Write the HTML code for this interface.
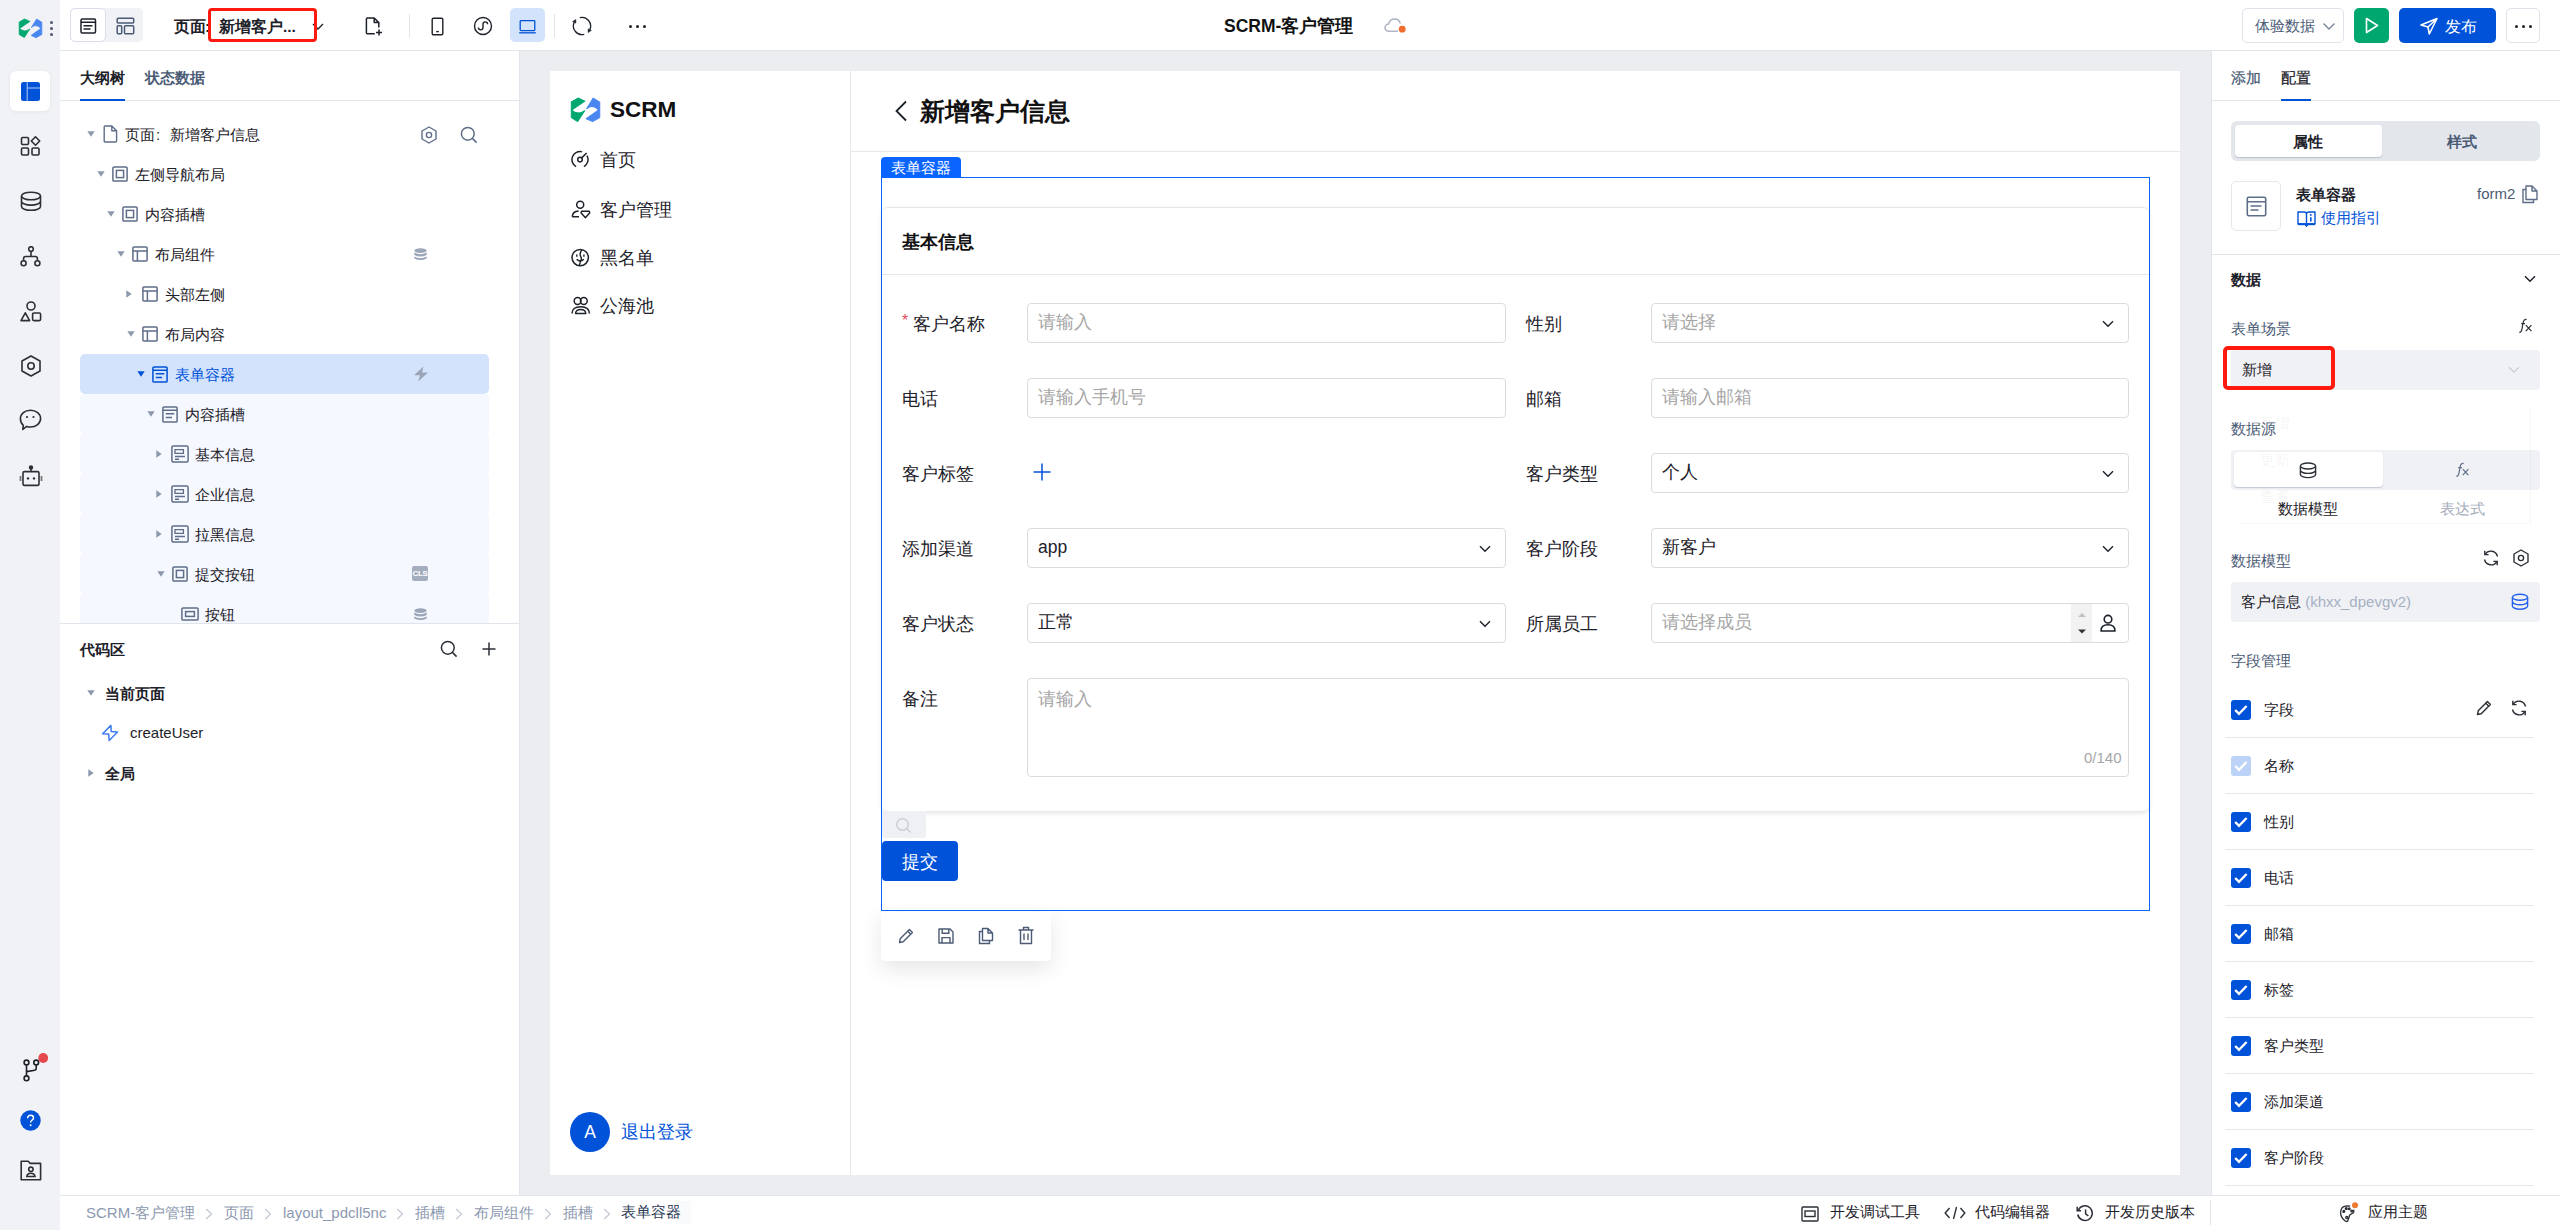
<!DOCTYPE html>
<html><head><meta charset="utf-8">
<style>
*{box-sizing:border-box;margin:0;padding:0}
html,body{width:2560px;height:1230px;overflow:hidden;background:#fff;font-family:"Liberation Sans",sans-serif;color:#1d2129}
.a{position:absolute}
svg{display:block}
.t{position:absolute;white-space:nowrap;line-height:1;margin-top:1.5px}
</style></head><body>
<!-- left rail -->
<div class="a" id="rail" style="left:0;top:0;width:60px;height:1230px;background:#f0f2f5"></div>
<!-- top bar -->
<div class="a" id="top" style="left:60px;top:0;width:2500px;height:51px;background:#fff;border-bottom:1px solid #e1e4ea"></div>
<!-- left panel -->
<div class="a" id="lp" style="left:60px;top:51px;width:460px;height:1144px;background:#fff;border-right:1px solid #e1e4ea"></div>
<!-- canvas -->
<div class="a" id="cv" style="left:520px;top:51px;width:1691px;height:1144px;background:#ebedf1"></div>
<div class="a" id="page" style="left:550px;top:71px;width:1630px;height:1104px;background:#fff"></div>
<!-- right panel -->
<div class="a" id="rp" style="left:2211px;top:51px;width:349px;height:1144px;background:#fff;border-left:1px solid #e1e4ea"></div>
<!-- bottom bar -->
<div class="a" id="bb" style="left:60px;top:1195px;width:2500px;height:35px;background:#fff;border-top:1px solid #e1e4ea"></div>

<!-- RAIL CONTENT -->
<svg class="a" style="left:15px;top:15px" width="32" height="26" viewBox="0 0 32 26"><path d="M4.2 7 L9.5 4 L15 6.4 L4.5 13.5 Q9.6 18 14.8 14 L9.3 22.6 L4.2 19.5 Z" fill="#00a870" stroke="#00a870" stroke-width="0.8" stroke-linejoin="round"/><path d="M21.6 4 L26.8 7.2 V19.5 L21.1 22.7 L16.1 20.4 L25.9 13.4 Q21.1 8.3 16.4 12.5 Z" fill="#4a86f0" stroke="#4a86f0" stroke-width="0.8" stroke-linejoin="round"/></svg>
<div class="a" style="left:50px;top:21px;width:3px;height:3px;border-radius:50%;background:#4b5670"></div>
<div class="a" style="left:50px;top:27px;width:3px;height:3px;border-radius:50%;background:#4b5670"></div>
<div class="a" style="left:50px;top:33px;width:3px;height:3px;border-radius:50%;background:#4b5670"></div>
<div class="a" style="left:10px;top:71px;width:40px;height:40px;border-radius:6px;background:#fff;box-shadow:0 1px 4px rgba(0,0,0,0.06)"></div>
<svg class="a" style="left:21px;top:82px" width="19" height="19" viewBox="0 0 19 19"><rect x="0" y="0" width="19" height="19" rx="2.5" fill="#0052d9"/><path d="M6.2 0 V19 M6.2 6 H19" stroke="#fff" stroke-width="1" opacity=".7"/></svg>
<svg class="a" style="left:20px;top:136px" width="21" height="21" viewBox="0 0 21 21" fill="none" stroke="#2b2f36" stroke-width="1.6"><rect x="1.5" y="1.5" width="7" height="7" rx="1.2"/><rect x="1.5" y="12" width="7" height="7" rx="1.2"/><rect x="12" y="12" width="7" height="7" rx="1.2"/><path d="M15.5 0.8 L19.7 5 L15.5 9.2 L11.3 5 Z" stroke-linejoin="round"/></svg>
<svg class="a" style="left:20px;top:191px" width="22" height="21" viewBox="0 0 22 21" fill="none" stroke="#2b2f36" stroke-width="1.6"><ellipse cx="11" cy="5" rx="9.5" ry="3.8"/><path d="M1.5 5 V15.5 C1.5 17.6 5.8 19.3 11 19.3 C16.2 19.3 20.5 17.6 20.5 15.5 V5 M1.5 10.3 C1.5 12.4 5.8 14.1 11 14.1 C16.2 14.1 20.5 12.4 20.5 10.3"/></svg>
<svg class="a" style="left:20px;top:246px" width="22" height="21" viewBox="0 0 22 21" fill="none" stroke="#2b2f36" stroke-width="1.6"><circle cx="11" cy="3" r="2.3"/><circle cx="3.6" cy="17.3" r="2.5"/><circle cx="17.4" cy="17.3" r="2.5"/><path d="M11 5.3 V10 M3.6 14.8 V12.5 Q3.6 10.5 5.6 10.5 H15.4 Q17.4 10.5 17.4 12.5 V14.8"/></svg>
<svg class="a" style="left:20px;top:301px" width="22" height="21" viewBox="0 0 22 21" fill="none" stroke="#2b2f36" stroke-width="1.6"><circle cx="11" cy="5" r="4"/><path d="M5.3 11.8 L9.6 19.6 H1 Z" stroke-linejoin="round"/><rect x="12.6" y="12" width="8" height="7.6" rx="1.3"/></svg>
<svg class="a" style="left:20px;top:355px" width="22" height="22" viewBox="0 0 22 22" fill="none" stroke="#2b2f36" stroke-width="1.6"><path d="M11 1 L20 6 V16 L11 21 L2 16 V6 Z" stroke-linejoin="round"/><circle cx="11" cy="11" r="3.2"/></svg>
<svg class="a" style="left:19px;top:409px" width="23" height="22" viewBox="0 0 23 22" fill="none" stroke="#2b2f36" stroke-width="1.6"><path d="M11.5 1.2 C17.2 1.2 21.6 4.9 21.6 9.6 C21.6 14.3 17.2 18 11.5 18 C10.2 18 8.9 17.8 7.7 17.4 L3.8 20.4 L4.3 16.4 C2.5 14.9 1.4 12.4 1.4 9.6 C1.4 4.9 5.8 1.2 11.5 1.2 Z" stroke-linejoin="round"/><circle cx="8" cy="8" r="1.1" fill="#2b2f36" stroke="none"/><circle cx="14.5" cy="8" r="1.1" fill="#2b2f36" stroke="none"/></svg>
<svg class="a" style="left:19px;top:465px" width="24" height="22" viewBox="0 0 24 22" fill="none" stroke="#2b2f36" stroke-width="1.6"><circle cx="12" cy="2.4" r="1.4" fill="#2b2f36"/><path d="M12 3.5 V6.5"/><rect x="4" y="6.6" width="16" height="13.8" rx="1.5"/><path d="M1.5 11 V16 M22.5 11 V16" stroke-width="1.8" stroke="#777"/><circle cx="9" cy="13.4" r="1.2" fill="#2b2f36" stroke="none"/><circle cx="15" cy="13.4" r="1.2" fill="#2b2f36" stroke="none"/></svg>
<svg class="a" style="left:20px;top:1052px" width="30" height="32" viewBox="0 0 30 32" fill="none" stroke="#1d2129" stroke-width="1.6"><circle cx="6.5" cy="10.5" r="2.4"/><circle cx="6.5" cy="26.3" r="2.4"/><circle cx="16.2" cy="10.5" r="2.4"/><path d="M6.5 12.9 V23.9 M16.2 12.9 V16.6 Q16.2 18 14.8 18.2 L6.5 19.6"/><circle cx="23.2" cy="6" r="4.9" fill="#e5484d" stroke="none"/></svg>
<svg class="a" style="left:20px;top:1110px" width="21" height="21" viewBox="0 0 21 21"><circle cx="10.5" cy="10.5" r="10.2" fill="#0052d9"/><path d="M7.6 8.2 C7.6 6.4 8.9 5.3 10.6 5.3 C12.3 5.3 13.5 6.4 13.5 7.9 C13.5 9.3 12.5 9.9 11.6 10.5 C10.9 11 10.6 11.5 10.6 12.6" fill="none" stroke="#fff" stroke-width="1.5"/><circle cx="10.6" cy="15.2" r="1" fill="#fff"/></svg>
<svg class="a" style="left:20px;top:1160px" width="22" height="21" viewBox="0 0 22 21" fill="none" stroke="#2b2f36" stroke-width="1.6"><path d="M1.2 1.3 H8.2 L10.2 3.4 H20.6 V19.8 H1.2 Z" stroke-linejoin="round"/><circle cx="10.9" cy="9.3" r="2.2"/><path d="M6.8 16.5 Q7.2 13.2 10.9 13.2 Q14.6 13.2 15 16.5 Z"/></svg>

<!-- TOPBAR CONTENT -->
<div class="a" style="left:70px;top:8px;width:73px;height:34px;border-radius:5px;background:#f0f2f5"></div>
<div class="a" style="left:70px;top:8px;width:36px;height:34px;border-radius:5px;background:#fff;border:1px solid #d9dee8"></div>
<svg class="a" style="left:80px;top:18px" width="17" height="16" viewBox="0 0 17 16" fill="none" stroke="#1d2129" stroke-width="1.5"><rect x="1" y="1" width="14.5" height="14" rx="1.2"/><path d="M1 4.3 H15.5 M3.5 7.8 H12.5 M3.5 10.9 H10.5"/></svg>
<svg class="a" style="left:116px;top:17px" width="19" height="18" viewBox="0 0 19 18" fill="none" stroke="#4b5b76" stroke-width="1.5"><rect x="1.2" y="1.2" width="16.5" height="4.8" rx="1"/><rect x="1.2" y="8.8" width="4.5" height="8" rx="1"/><rect x="8.5" y="8.8" width="9.2" height="8" rx="1"/></svg>
<div class="t" style="left:174px;top:17px;font-size:15.5px;font-weight:bold;color:#1d2129">页面</div><div class="t" style="left:205px;top:17px;font-size:15.5px;font-weight:bold;color:#1d2129">:</div>
<div class="t" style="left:219px;top:17px;font-size:15.5px;font-weight:bold;color:#1d2129">新增客户...</div>
<svg class="a" style="left:312px;top:22px" width="12" height="10" viewBox="0 0 12 10" fill="none" stroke="#1d2129" stroke-width="1.4"><path d="M1 2 L6 7 L11 2"/></svg>
<div class="a" style="left:208px;top:8px;width:109px;height:34px;border:3.3px solid #ff1a0f;border-radius:4px"></div>
<svg class="a" style="left:365px;top:17px" width="18" height="19" viewBox="0 0 18 19" fill="none" stroke="#1d2129" stroke-width="1.5"><path d="M9.8 16.8 H2.4 Q1.4 16.8 1.4 15.8 V2 Q1.4 1 2.4 1 H9.2 L13.8 5.6 V10.5 M9.2 1 V5.6 H13.8" stroke-linejoin="round"/><path d="M14 12.5 V18.5 M11 15.5 H17"/></svg>
<div class="a" style="left:409px;top:14px;width:1px;height:24px;background:#e1e4ea"></div>
<svg class="a" style="left:431px;top:17px" width="13" height="19" viewBox="0 0 13 19" fill="none" stroke="#1d2129" stroke-width="1.4"><rect x="1.2" y="1.2" width="10.6" height="16.6" rx="1.3"/><path d="M5.2 14.6 H7.8"/></svg>
<svg class="a" style="left:472.5px;top:16px" width="20" height="20" viewBox="0 0 20 20" fill="none" stroke="#1d2129" stroke-width="1.4"><circle cx="10" cy="10" r="8.5"/><path d="M5.4 11.6 A2.3 2.3 0 0 0 10 11.6 V8.2 A2.3 2.3 0 1 1 14.6 8.2"/></svg>
<div class="a" style="left:510px;top:8px;width:35px;height:34px;border-radius:5px;background:#d4e3fc"></div>
<svg class="a" style="left:518px;top:19px" width="19" height="16" viewBox="0 0 19 16" fill="none" stroke="#0052d9" stroke-width="1.3"><rect x="2.2" y="1.6" width="14.6" height="10" rx="0.8"/><path d="M1.2 13.8 H17.8"/></svg>
<div class="a" style="left:554px;top:14px;width:1px;height:24px;background:#e1e4ea"></div>
<svg class="a" style="left:572.4px;top:15.9px" width="20" height="20" viewBox="0 0 20 20" fill="none" stroke="#1d2129" stroke-width="1.3"><path d="M7.77 1.69 A8.6 8.6 0 0 1 17.79 13.63"/><path d="M12.23 18.31 A8.6 8.6 0 0 1 2.21 6.37"/><path d="M19.42 14.39 L16.08 16.6 L16.16 12.87 Z" fill="#1d2129" stroke-width="0.5" stroke-linejoin="round"/><path d="M0.58 5.61 L3.92 3.4 L3.84 7.13 Z" fill="#1d2129" stroke-width="0.5" stroke-linejoin="round"/></svg>
<div class="a" style="left:629px;top:25px;width:3px;height:3px;border-radius:50%;background:#1d2129"></div>
<div class="a" style="left:636px;top:25px;width:3px;height:3px;border-radius:50%;background:#1d2129"></div>
<div class="a" style="left:643px;top:25px;width:3px;height:3px;border-radius:50%;background:#1d2129"></div>
<div class="t" style="left:1224px;top:16px;font-size:17.5px;font-weight:bold;color:#111">SCRM-客户管理</div>
<svg class="a" style="left:1384px;top:17px" width="24" height="18" viewBox="0 0 24 18" fill="none"><path d="M6 14.2 H4.8 C2.6 14.2 1 12.6 1 10.6 C1 8.6 2.6 7 4.6 7 C5.2 4 7.6 2 10.6 2 C13.4 2 15.7 3.8 16.3 6.6" stroke="#aab2c0" stroke-width="1.4"/><path d="M6 14.2 H14" stroke="#aab2c0" stroke-width="1.4"/><circle cx="18.2" cy="12.2" r="3.4" fill="#ef6c2f"/></svg>
<div class="a" style="left:2242px;top:8px;width:102px;height:35px;border:1px solid #dfe3ea;border-radius:5px;background:#fff"></div>
<div class="t" style="left:2255px;top:16px;font-size:15px;color:#4b5b76">体验数据</div>
<svg class="a" style="left:2322px;top:22px" width="14" height="9" viewBox="0 0 14 9" fill="none" stroke="#7b8699" stroke-width="1.4"><path d="M1.5 1.5 L7 7 L12.5 1.5"/></svg>
<div class="a" style="left:2354px;top:8px;width:35px;height:35px;border-radius:5px;background:#00a870"></div>
<svg class="a" style="left:2365px;top:17px" width="14" height="17" viewBox="0 0 14 17" fill="none" stroke="#fff" stroke-width="1.6"><path d="M1.5 1.5 L12.5 8.5 L1.5 15.5 Z" stroke-linejoin="round"/></svg>
<div class="a" style="left:2399px;top:8px;width:97px;height:35px;border-radius:5px;background:#0052d9"></div>
<svg class="a" style="left:2420px;top:17px" width="18" height="18" viewBox="0 0 18 18" fill="none" stroke="#fff" stroke-width="1.6"><path d="M1 8 L17 1.5 L9.3 17 L8 10 Z M8 10 L17 1.5" stroke-linejoin="round"/></svg>
<div class="t" style="left:2445px;top:17px;font-size:15.5px;color:#fff">发布</div>
<div class="a" style="left:2506px;top:8px;width:34px;height:35px;border:1px solid #dfe3ea;border-radius:5px;background:#fff"></div>
<div class="a" style="left:2515px;top:25px;width:3px;height:3px;border-radius:50%;background:#1d2129"></div>
<div class="a" style="left:2522px;top:25px;width:3px;height:3px;border-radius:50%;background:#1d2129"></div>
<div class="a" style="left:2529px;top:25px;width:3px;height:3px;border-radius:50%;background:#1d2129"></div>
<!-- LEFT PANEL -->
<div class="t" style="left:80px;top:68px;font-size:15px;color:#1d2129;font-weight:bold">大纲树</div>
<div class="t" style="left:145px;top:68px;font-size:15px;color:#4b5b76;font-weight:bold">状态数据</div>
<div class="a" style="left:60px;top:100px;width:459px;height:1px;background:#e1e4ea"></div>
<div class="a" style="left:80px;top:99px;width:45px;height:2px;background:#0052d9"></div>
<div class="a" style="left:80px;top:354px;width:409px;height:40px;border-radius:5px;background:#d4e3fc"></div>
<div class="a" style="left:80px;top:394px;width:409px;height:40px;border-radius:4px;background:#f5f8ff"></div>
<div class="a" style="left:80px;top:434px;width:409px;height:40px;border-radius:4px;background:#f5f8ff"></div>
<div class="a" style="left:80px;top:474px;width:409px;height:40px;border-radius:4px;background:#f5f8ff"></div>
<div class="a" style="left:80px;top:514px;width:409px;height:40px;border-radius:4px;background:#f5f8ff"></div>
<div class="a" style="left:80px;top:554px;width:409px;height:40px;border-radius:4px;background:#f5f8ff"></div>
<div class="a" style="left:80px;top:594px;width:409px;height:40px;border-radius:4px;background:#f5f8ff"></div>
<div class="a" style="left:80px;top:634px;width:409px;height:29px;border-radius:4px;background:#f5f8ff"></div>
<svg class="a" style="left:87px;top:131px" width="8" height="6" viewBox="0 0 8 6"><path d="M0.3 0.3 H7.7 L4 5.7 Z" fill="#8d98ad"/></svg>
<svg class="a" style="left:103px;top:125px" width="15" height="18" viewBox="0 0 15 18" fill="none" stroke="#5e6d88" stroke-width="1.4"><path d="M1.2 2 Q1.2 1 2.2 1 H8.8 L13.6 5.8 V16 Q13.6 17 12.6 17 H2.2 Q1.2 17 1.2 16 Z M8.8 1 V5.8 H13.6" stroke-linejoin="round"/></svg>
<div class="t" style="left:125px;top:125px;font-size:15px;color:#1d2129;font-weight:normal">页面</div><div class="t" style="left:156px;top:125px;font-size:15px;color:#1d2129;font-weight:normal">:</div><div class="t" style="left:170px;top:125px;font-size:15px;color:#1d2129;font-weight:normal">新增客户信息</div>
<svg class="a" style="left:97px;top:171px" width="8" height="6" viewBox="0 0 8 6"><path d="M0.3 0.3 H7.7 L4 5.7 Z" fill="#8d98ad"/></svg>
<svg class="a" style="left:112px;top:166px" width="16" height="16" viewBox="0 0 16 16" fill="none" stroke="#5e6d88" stroke-width="1.5"><rect x="0.9" y="0.9" width="14.2" height="14.2" rx="1.2"/><rect x="4.4" y="4.4" width="7.2" height="7.2"/></svg>
<div class="t" style="left:135px;top:165px;font-size:15px;color:#1d2129;font-weight:normal">左侧导航布局</div>
<svg class="a" style="left:107px;top:211px" width="8" height="6" viewBox="0 0 8 6"><path d="M0.3 0.3 H7.7 L4 5.7 Z" fill="#8d98ad"/></svg>
<svg class="a" style="left:122px;top:206px" width="16" height="16" viewBox="0 0 16 16" fill="none" stroke="#5e6d88" stroke-width="1.5"><rect x="0.9" y="0.9" width="14.2" height="14.2" rx="1.2"/><rect x="4.4" y="4.4" width="7.2" height="7.2"/></svg>
<div class="t" style="left:145px;top:205px;font-size:15px;color:#1d2129;font-weight:normal">内容插槽</div>
<svg class="a" style="left:117px;top:251px" width="8" height="6" viewBox="0 0 8 6"><path d="M0.3 0.3 H7.7 L4 5.7 Z" fill="#8d98ad"/></svg>
<svg class="a" style="left:132px;top:246px" width="16" height="16" viewBox="0 0 16 16" fill="none" stroke="#5e6d88" stroke-width="1.5"><rect x="0.9" y="0.9" width="14.2" height="14.2" rx="1"/><path d="M0.9 5 H15.1 M5.4 5 V15.1"/></svg>
<div class="t" style="left:155px;top:245px;font-size:15px;color:#1d2129;font-weight:normal">布局组件</div>
<svg class="a" style="left:126px;top:290px" width="6" height="8" viewBox="0 0 6 8"><path d="M0.3 0.3 V7.7 L5.7 4 Z" fill="#8d98ad"/></svg>
<svg class="a" style="left:142px;top:286px" width="16" height="16" viewBox="0 0 16 16" fill="none" stroke="#5e6d88" stroke-width="1.5"><rect x="0.9" y="0.9" width="14.2" height="14.2" rx="1"/><path d="M0.9 5 H15.1 M5.4 5 V15.1"/></svg>
<div class="t" style="left:165px;top:285px;font-size:15px;color:#1d2129;font-weight:normal">头部左侧</div>
<svg class="a" style="left:127px;top:331px" width="8" height="6" viewBox="0 0 8 6"><path d="M0.3 0.3 H7.7 L4 5.7 Z" fill="#8d98ad"/></svg>
<svg class="a" style="left:142px;top:326px" width="16" height="16" viewBox="0 0 16 16" fill="none" stroke="#5e6d88" stroke-width="1.5"><rect x="0.9" y="0.9" width="14.2" height="14.2" rx="1"/><path d="M0.9 5 H15.1 M5.4 5 V15.1"/></svg>
<div class="t" style="left:165px;top:325px;font-size:15px;color:#1d2129;font-weight:normal">布局内容</div>
<svg class="a" style="left:137px;top:371px" width="8" height="6" viewBox="0 0 8 6"><path d="M0.3 0.3 H7.7 L4 5.7 Z" fill="#0052d9"/></svg>
<svg class="a" style="left:152px;top:366px" width="16" height="17" viewBox="0 0 16 17" fill="none" stroke="#0052d9" stroke-width="1.5"><rect x="0.9" y="0.9" width="14.2" height="15.2" rx="1.2"/><path d="M0.9 4.2 H15.1 M3.8 7.8 H12.2 M3.8 11.4 H10"/></svg>
<div class="t" style="left:175px;top:365px;font-size:15px;color:#0052d9;font-weight:normal">表单容器</div>
<svg class="a" style="left:147px;top:411px" width="8" height="6" viewBox="0 0 8 6"><path d="M0.3 0.3 H7.7 L4 5.7 Z" fill="#8d98ad"/></svg>
<svg class="a" style="left:162px;top:406px" width="16" height="17" viewBox="0 0 16 17" fill="none" stroke="#5e6d88" stroke-width="1.5"><rect x="0.9" y="0.9" width="14.2" height="15.2" rx="1.2"/><path d="M0.9 4.2 H15.1 M3.8 7.8 H12.2 M3.8 11.4 H10"/></svg>
<div class="t" style="left:185px;top:405px;font-size:15px;color:#1d2129;font-weight:normal">内容插槽</div>
<svg class="a" style="left:156px;top:450px" width="6" height="8" viewBox="0 0 6 8"><path d="M0.3 0.3 V7.7 L5.7 4 Z" fill="#8d98ad"/></svg>
<svg class="a" style="left:171px;top:445px" width="18" height="18" viewBox="0 0 18 18" fill="none" stroke="#5e6d88" stroke-width="1.5"><rect x="0.9" y="0.9" width="16.2" height="16.2" rx="1.5"/><path d="M4 4.6 H12.4 V8.4 H4 Z" stroke-width="1.3"/><path d="M4 11.4 H14 M4 14.2 H8"/></svg>
<div class="t" style="left:195px;top:445px;font-size:15px;color:#1d2129;font-weight:normal">基本信息</div>
<svg class="a" style="left:156px;top:490px" width="6" height="8" viewBox="0 0 6 8"><path d="M0.3 0.3 V7.7 L5.7 4 Z" fill="#8d98ad"/></svg>
<svg class="a" style="left:171px;top:485px" width="18" height="18" viewBox="0 0 18 18" fill="none" stroke="#5e6d88" stroke-width="1.5"><rect x="0.9" y="0.9" width="16.2" height="16.2" rx="1.5"/><path d="M4 4.6 H12.4 V8.4 H4 Z" stroke-width="1.3"/><path d="M4 11.4 H14 M4 14.2 H8"/></svg>
<div class="t" style="left:195px;top:485px;font-size:15px;color:#1d2129;font-weight:normal">企业信息</div>
<svg class="a" style="left:156px;top:530px" width="6" height="8" viewBox="0 0 6 8"><path d="M0.3 0.3 V7.7 L5.7 4 Z" fill="#8d98ad"/></svg>
<svg class="a" style="left:171px;top:525px" width="18" height="18" viewBox="0 0 18 18" fill="none" stroke="#5e6d88" stroke-width="1.5"><rect x="0.9" y="0.9" width="16.2" height="16.2" rx="1.5"/><path d="M4 4.6 H12.4 V8.4 H4 Z" stroke-width="1.3"/><path d="M4 11.4 H14 M4 14.2 H8"/></svg>
<div class="t" style="left:195px;top:525px;font-size:15px;color:#1d2129;font-weight:normal">拉黑信息</div>
<svg class="a" style="left:157px;top:571px" width="8" height="6" viewBox="0 0 8 6"><path d="M0.3 0.3 H7.7 L4 5.7 Z" fill="#8d98ad"/></svg>
<svg class="a" style="left:172px;top:566px" width="16" height="16" viewBox="0 0 16 16" fill="none" stroke="#5e6d88" stroke-width="1.5"><rect x="0.9" y="0.9" width="14.2" height="14.2" rx="1.2"/><rect x="4.4" y="4.4" width="7.2" height="7.2"/></svg>
<div class="t" style="left:195px;top:565px;font-size:15px;color:#1d2129;font-weight:normal">提交按钮</div>
<svg class="a" style="left:181px;top:607px" width="18" height="14" viewBox="0 0 18 14" fill="none" stroke="#5e6d88" stroke-width="1.5"><rect x="0.9" y="0.9" width="16.2" height="12.2" rx="1.2"/><rect x="4.6" y="4.6" width="8.8" height="4.8"/></svg>
<div class="t" style="left:205px;top:605px;font-size:15px;color:#1d2129;font-weight:normal">按钮</div>
<svg class="a" style="left:420px;top:126px" width="18" height="18" viewBox="0 0 18 18" fill="none" stroke="#5e6d88" stroke-width="1.4"><path d="M9 1 L16 5 V13 L9 17 L2 13 V5 Z" stroke-linejoin="round"/><circle cx="9" cy="9" r="2.6"/></svg>
<svg class="a" style="left:460px;top:126px" width="18" height="18" viewBox="0 0 18 18" fill="none" stroke="#5e6d88" stroke-width="1.5"><circle cx="7.8" cy="7.8" r="6.4"/><path d="M12.4 12.4 L16.6 16.6"/></svg>
<svg class="a" style="left:414px;top:248px" width="13" height="13" viewBox="0 0 13 13"><ellipse cx="6.5" cy="2.6" rx="6.2" ry="2.4" fill="#9aa5b8"/><path d="M0.3 4.6 Q6.5 8 12.7 4.6 V6.9 Q6.5 10.3 0.3 6.9 Z M0.3 8.6 Q6.5 12 12.7 8.6 V10.4 Q6.5 13.8 0.3 10.4 Z" fill="#9aa5b8"/></svg>
<svg class="a" style="left:413px;top:366px" width="16" height="16" viewBox="0 0 16 16"><path d="M10.5 0.5 L1 9.2 H7 L5.2 15.5 L15 6.6 H9 Z" fill="#9aa5b8"/></svg>
<div class="a" style="left:412px;top:566px;width:16px;height:15px;border-radius:2px;background:#a5aebf;color:#fff;font-size:8px;font-weight:bold;line-height:15px;text-align:center;letter-spacing:-0.3px">CLS</div>
<div class="a" style="left:60px;top:623px;width:459px;height:1px;background:#e1e4ea"></div>
<svg class="a" style="left:414px;top:608px" width="13" height="13" viewBox="0 0 13 13"><ellipse cx="6.5" cy="2.6" rx="6.2" ry="2.4" fill="#9aa5b8"/><path d="M0.3 4.6 Q6.5 8 12.7 4.6 V6.9 Q6.5 10.3 0.3 6.9 Z M0.3 8.6 Q6.5 12 12.7 8.6 V10.4 Q6.5 13.8 0.3 10.4 Z" fill="#9aa5b8"/></svg>
<div class="a" style="left:60px;top:624px;width:459px;height:571px;background:#fff"></div>
<div class="t" style="left:80px;top:640px;font-size:15px;color:#1d2129;font-weight:bold">代码区</div>
<svg class="a" style="left:440px;top:640px" width="18" height="18" viewBox="0 0 18 18" fill="none" stroke="#2b2f36" stroke-width="1.5"><circle cx="7.8" cy="7.8" r="6.4"/><path d="M12.4 12.4 L16.6 16.6"/></svg>
<svg class="a" style="left:481px;top:641px" width="16" height="16" viewBox="0 0 16 16" fill="none" stroke="#2b2f36" stroke-width="1.5"><path d="M8 1.5 V14.5 M1.5 8 H14.5"/></svg>
<svg class="a" style="left:87px;top:690px" width="8" height="6" viewBox="0 0 8 6"><path d="M0.3 0.3 H7.7 L4 5.7 Z" fill="#8d98ad"/></svg>
<div class="t" style="left:105px;top:684px;font-size:15px;color:#1d2129;font-weight:bold">当前页面</div>
<svg class="a" style="left:100px;top:723px" width="20" height="20" viewBox="0 0 20 20" fill="none" stroke="#3d7bf0" stroke-width="1.5" stroke-linejoin="round"><path d="M10.9 2.4 L2.6 10.8 L8.7 11 L9.2 17.6 L17.5 9 L11.2 8.6 Z"/></svg>
<div class="t" style="left:130px;top:723px;font-size:15px;color:#1d2129;font-weight:normal">createUser</div>
<svg class="a" style="left:88px;top:769px" width="6" height="8" viewBox="0 0 6 8"><path d="M0.3 0.3 V7.7 L5.7 4 Z" fill="#8d98ad"/></svg>
<div class="t" style="left:105px;top:764px;font-size:15px;color:#1d2129;font-weight:bold">全局</div>
<!-- CANVAS -->
<div class="a" style="left:850px;top:71px;width:1px;height:1104px;background:#e7e8eb"></div>
<svg class="a" style="left:565.5px;top:92.9px" width="40.3" height="32.8" viewBox="0 0 32 26"><path d="M4.2 7 L9.5 4 L15 6.4 L4.5 13.5 Q9.6 18 14.8 14 L9.3 22.6 L4.2 19.5 Z" fill="#00a870" stroke="#00a870" stroke-width="0.8" stroke-linejoin="round"/><path d="M21.6 4 L26.8 7.2 V19.5 L21.1 22.7 L16.1 20.4 L25.9 13.4 Q21.1 8.3 16.4 12.5 Z" fill="#4a86f0" stroke="#4a86f0" stroke-width="0.8" stroke-linejoin="round"/></svg>
<div class="t" style="left:610px;top:97px;font-size:22.5px;color:#111;font-weight:bold;">SCRM</div>
<svg class="a" style="left:571px;top:150px" width="20" height="19" viewBox="0 0 20 19"><path d="M5 16.53 A8 8 0 0 1 11.07 1.87 M15.93 5.6 A8 8 0 0 1 13 16.53" fill="none" stroke="#1d2129" stroke-width="1.5"/><circle cx="9" cy="9.6" r="2.3" fill="none" stroke="#1d2129" stroke-width="1.5"/><path d="M10.7 7.9 L15.6 3" stroke="#1d2129" stroke-width="1.5"/></svg>
<div class="t" style="left:600px;top:150px;font-size:17.5px;color:#1d2129;font-weight:normal;">首页</div>
<svg class="a" style="left:571px;top:200px" width="20" height="19" viewBox="0 0 20 19"><circle cx="9.2" cy="4.8" r="3.5" fill="none" stroke="#1d2129" stroke-width="1.5"/><path d="M1.3 16.8 H8 M1.3 16.8 Q1.4 11.4 7.6 11" fill="none" stroke="#1d2129" stroke-width="1.5"/><path d="M10.6 11.2 H18.2 L18.8 12.8 L14.4 17.8 L10 12.8 Z" fill="none" stroke="#1d2129" stroke-width="1.4" stroke-linejoin="round"/></svg>
<div class="t" style="left:600px;top:200px;font-size:17.5px;color:#1d2129;font-weight:normal;">客户管理</div>
<svg class="a" style="left:571px;top:248px" width="20" height="19" viewBox="0 0 20 19"><circle cx="9.2" cy="9.6" r="8.2" fill="none" stroke="#1d2129" stroke-width="1.5"/><path d="M11 1.6 Q8 5.5 9.8 8.6 Q11.2 11 9.4 13.2 L8.4 17.6" fill="none" stroke="#1d2129" stroke-width="1.4"/><path d="M5.8 6.6 V8.8 M12.9 6.6 V8.8" stroke="#1d2129" stroke-width="1.4"/><path d="M5.6 11.2 Q9.2 14.6 12.8 11.2" fill="none" stroke="#1d2129" stroke-width="1.4"/></svg>
<div class="t" style="left:600px;top:248px;font-size:17.5px;color:#1d2129;font-weight:normal;">黑名单</div>
<svg class="a" style="left:571px;top:296px" width="20" height="19" viewBox="0 0 20 19"><circle cx="6.6" cy="5" r="3.4" fill="none" stroke="#1d2129" stroke-width="1.5"/><circle cx="12.8" cy="5" r="3.4" fill="none" stroke="#1d2129" stroke-width="1.5"/><path d="M1 17.6 Q1 10.8 9.7 10.8 Q18.4 10.8 18.4 17.6 M4.6 17.6 Q4.8 13.6 9.7 13.6 Q14.6 13.6 14.8 17.6 Z" fill="none" stroke="#1d2129" stroke-width="1.5" stroke-linejoin="round"/></svg>
<div class="t" style="left:600px;top:296px;font-size:17.5px;color:#1d2129;font-weight:normal;">公海池</div>
<div class="a" style="left:570px;top:1112px;width:40px;height:40px;border-radius:50%;background:#0052d9;color:#fff;font-size:17.5px;line-height:40px;text-align:center">A</div>
<div class="t" style="left:621px;top:1122px;font-size:17.5px;color:#0052d9;font-weight:normal;">退出登录</div>
<svg class="a" style="left:894px;top:100px" width="14" height="22" viewBox="0 0 14 22" fill="none" stroke="#1d2129" stroke-width="1.8"><path d="M12 1.5 L2.5 11 L12 20.5"/></svg>
<div class="t" style="left:920px;top:97px;font-size:25px;color:#111;font-weight:bold;">新增客户信息</div>
<div class="a" style="left:851px;top:151px;width:1329px;height:1px;background:#e7e8eb"></div>
<div class="a" style="left:881px;top:157px;width:80px;height:21px;border-radius:4px 4px 0 0;background:#0a64ff"></div>
<div class="t" style="left:891px;top:158px;font-size:15px;color:#fff;font-weight:normal;">表单容器</div>
<div class="a" style="left:881px;top:177px;width:1269px;height:734px;border:1.5px solid #0a64ff;border-width:1.5px 1px 1px 1px"></div>
<div class="a" style="left:882px;top:207px;width:1267px;height:604px;border-radius:6px 6px 6px 6px;border-top:1px solid #e7e7e7;background:#fff;box-shadow:0 2px 5px rgba(0,0,0,0.12)"></div>
<div class="t" style="left:902px;top:232px;font-size:17.5px;color:#111;font-weight:bold;">基本信息</div>
<div class="a" style="left:882px;top:274px;width:1267px;height:1px;background:#e7e7e7"></div>
<div class="t" style="left:902px;top:311px;font-size:16px;color:#e34d59;font-weight:normal;">*</div>
<div class="t" style="left:913px;top:314px;font-size:17.5px;color:#1d2129;font-weight:normal;">客户名称</div>
<div class="a" style="left:1027px;top:303px;width:479px;height:40px;border:1px solid #dcdcdc;border-radius:4px;background:#fff"></div>
<div class="t" style="left:1038px;top:312px;font-size:17.5px;color:#a6a6a6;font-weight:normal;">请输入</div>
<div class="t" style="left:1526px;top:314px;font-size:17.5px;color:#1d2129;font-weight:normal;">性别</div>
<div class="a" style="left:1651px;top:303px;width:478px;height:40px;border:1px solid #dcdcdc;border-radius:4px;background:#fff"></div>
<div class="t" style="left:1662px;top:312px;font-size:17.5px;color:#a6a6a6;font-weight:normal;">请选择</div>
<svg class="a" style="left:2102px;top:320px" width="12" height="8" viewBox="0 0 12 8" fill="none" stroke="#1d2129" stroke-width="1.4"><path d="M1 1.2 L6 6.2 L11 1.2"/></svg>
<div class="t" style="left:902px;top:389px;font-size:17.5px;color:#1d2129;font-weight:normal;">电话</div>
<div class="a" style="left:1027px;top:378px;width:479px;height:40px;border:1px solid #dcdcdc;border-radius:4px;background:#fff"></div>
<div class="t" style="left:1038px;top:387px;font-size:17.5px;color:#a6a6a6;font-weight:normal;">请输入手机号</div>
<div class="t" style="left:1526px;top:389px;font-size:17.5px;color:#1d2129;font-weight:normal;">邮箱</div>
<div class="a" style="left:1651px;top:378px;width:478px;height:40px;border:1px solid #dcdcdc;border-radius:4px;background:#fff"></div>
<div class="t" style="left:1662px;top:387px;font-size:17.5px;color:#a6a6a6;font-weight:normal;">请输入邮箱</div>
<div class="t" style="left:902px;top:464px;font-size:17.5px;color:#1d2129;font-weight:normal;">客户标签</div>
<svg class="a" style="left:1033px;top:463px" width="18" height="18" viewBox="0 0 18 18" fill="none" stroke="#0052d9" stroke-width="1.5"><path d="M9 0.5 V17.5 M0.5 9 H17.5"/></svg>
<div class="t" style="left:1526px;top:464px;font-size:17.5px;color:#1d2129;font-weight:normal;">客户类型</div>
<div class="a" style="left:1651px;top:453px;width:478px;height:40px;border:1px solid #dcdcdc;border-radius:4px;background:#fff"></div>
<div class="t" style="left:1662px;top:462px;font-size:17.5px;color:#1d2129;font-weight:normal;">个人</div>
<svg class="a" style="left:2102px;top:470px" width="12" height="8" viewBox="0 0 12 8" fill="none" stroke="#1d2129" stroke-width="1.4"><path d="M1 1.2 L6 6.2 L11 1.2"/></svg>
<div class="t" style="left:902px;top:539px;font-size:17.5px;color:#1d2129;font-weight:normal;">添加渠道</div>
<div class="a" style="left:1027px;top:528px;width:479px;height:40px;border:1px solid #dcdcdc;border-radius:4px;background:#fff"></div>
<div class="t" style="left:1038px;top:537px;font-size:17.5px;color:#1d2129;font-weight:normal;">app</div>
<svg class="a" style="left:1479px;top:545px" width="12" height="8" viewBox="0 0 12 8" fill="none" stroke="#1d2129" stroke-width="1.4"><path d="M1 1.2 L6 6.2 L11 1.2"/></svg>
<div class="t" style="left:1526px;top:539px;font-size:17.5px;color:#1d2129;font-weight:normal;">客户阶段</div>
<div class="a" style="left:1651px;top:528px;width:478px;height:40px;border:1px solid #dcdcdc;border-radius:4px;background:#fff"></div>
<div class="t" style="left:1662px;top:537px;font-size:17.5px;color:#1d2129;font-weight:normal;">新客户</div>
<svg class="a" style="left:2102px;top:545px" width="12" height="8" viewBox="0 0 12 8" fill="none" stroke="#1d2129" stroke-width="1.4"><path d="M1 1.2 L6 6.2 L11 1.2"/></svg>
<div class="t" style="left:902px;top:614px;font-size:17.5px;color:#1d2129;font-weight:normal;">客户状态</div>
<div class="a" style="left:1027px;top:603px;width:479px;height:40px;border:1px solid #dcdcdc;border-radius:4px;background:#fff"></div>
<div class="t" style="left:1038px;top:612px;font-size:17.5px;color:#1d2129;font-weight:normal;">正常</div>
<svg class="a" style="left:1479px;top:620px" width="12" height="8" viewBox="0 0 12 8" fill="none" stroke="#1d2129" stroke-width="1.4"><path d="M1 1.2 L6 6.2 L11 1.2"/></svg>
<div class="t" style="left:1526px;top:614px;font-size:17.5px;color:#1d2129;font-weight:normal;">所属员工</div>
<div class="a" style="left:1651px;top:603px;width:478px;height:40px;border:1px solid #dcdcdc;border-radius:4px;background:#fff"></div>
<div class="t" style="left:1662px;top:612px;font-size:17.5px;color:#a6a6a6;font-weight:normal;">请选择成员</div>
<div class="a" style="left:2071px;top:604px;width:21px;height:38px;background:#f2f2f2"></div>
<svg class="a" style="left:2077px;top:610px" width="10" height="26" viewBox="0 0 10 26"><path d="M1 7 L5 3 L9 7 Z" fill="#c0c0c0"/><path d="M1 19.5 L5 23.5 L9 19.5 Z" fill="#333"/></svg>
<svg class="a" style="left:2099px;top:614px" width="18" height="18" viewBox="0 0 18 18" fill="none" stroke="#1d2129" stroke-width="1.6"><circle cx="9" cy="5.2" r="3.8"/><path d="M2 17 Q2 10.8 9 10.8 Q16 10.8 16 17 Z" stroke-linejoin="round"/></svg>
<div class="t" style="left:902px;top:689px;font-size:17.5px;color:#1d2129;font-weight:normal;">备注</div>
<div class="a" style="left:1027px;top:678px;width:1102px;height:99px;border:1px solid #dcdcdc;border-radius:4px;background:#fff"></div>
<div class="t" style="left:1038px;top:689px;font-size:17.5px;color:#a6a6a6;font-weight:normal;">请输入</div>
<div class="t" style="left:2084px;top:748px;font-size:15px;color:#a6a6a6;font-weight:normal;">0/140</div>
<div class="a" style="left:882px;top:811px;width:44px;height:27px;border-radius:0 0 3px 3px;background:#eef0f4"></div>
<svg class="a" style="left:895px;top:817px" width="17" height="17" viewBox="0 0 17 17" fill="none" stroke="#c8cdd6" stroke-width="1.4"><circle cx="7.5" cy="7.5" r="5.8"/><path d="M11.6 11.6 L15.6 15.6"/></svg>
<div class="a" style="left:882px;top:841px;width:76px;height:40px;border-radius:4px;background:#0052d9"></div>
<div class="t" style="left:902px;top:852px;font-size:17.5px;color:#fff;font-weight:normal;">提交</div>
<div class="a" style="left:881px;top:912px;width:170px;height:49px;border-radius:0 0 4px 4px;background:#fff;box-shadow:0 8px 22px rgba(0,0,0,0.10)"></div>
<svg class="a" style="left:897px;top:927px" width="18" height="18" viewBox="0 0 18 18" fill="none" stroke="#4b5b76" stroke-width="1.4"><path d="M2.5 15.5 L3.2 11.8 L12.4 2.6 L15.4 5.6 L6.2 14.8 Z M10.8 4.2 L13.8 7.2" stroke-linejoin="round"/></svg>
<svg class="a" style="left:937px;top:927px" width="18" height="18" viewBox="0 0 18 18" fill="none" stroke="#4b5b76" stroke-width="1.4"><path d="M2 2 H13 L16 5 V16 H2 Z" stroke-linejoin="round"/><path d="M5.2 2 V6.2 H11.8 V2 M5 16 V10.6 H13 V16"/></svg>
<svg class="a" style="left:977px;top:927px" width="18" height="18" viewBox="0 0 18 18" fill="none" stroke="#4b5b76" stroke-width="1.4"><path d="M5.5 1.5 H11 L15.5 6 V13.5 H5.5 Z M11 1.5 V6 H15.5" stroke-linejoin="round"/><path d="M5.5 4.5 H2.5 V16.5 H12.5 V13.5"/></svg>
<svg class="a" style="left:1017px;top:926px" width="18" height="19" viewBox="0 0 18 19" fill="none" stroke="#4b5b76" stroke-width="1.4"><path d="M1.5 4 H16.5 M6.5 4 V1.5 H11.5 V4 M3.5 4 V17.5 H14.5 V4 M7 7.5 V14 M11 7.5 V14"/></svg>
<!-- RIGHT PANEL + BOTTOM -->
<div class="t" style="left:2231px;top:68px;font-size:15px;color:#4b5b76;font-weight:normal;-webkit-text-stroke:0.25px #4b5b76">添加</div>
<div class="t" style="left:2281px;top:68px;font-size:15px;color:#1d2129;font-weight:normal;-webkit-text-stroke:0.25px #1d2129">配置</div>
<div class="a" style="left:2212px;top:100px;width:348px;height:1px;background:#e1e4ea"></div>
<div class="a" style="left:2281px;top:99px;width:30px;height:2px;background:#0052d9"></div>
<div class="a" style="left:2231px;top:121px;width:309px;height:40px;border-radius:6px;background:#e3e6eb"></div>
<div class="a" style="left:2235px;top:125px;width:147px;height:32px;border-radius:4px;background:#fff;box-shadow:0 1px 1px rgba(60,80,110,0.25)"></div>
<div class="t" style="left:2293px;top:132px;font-size:15px;color:#1d2129;font-weight:bold;">属性</div>
<div class="t" style="left:2447px;top:132px;font-size:15px;color:#4b5b76;font-weight:bold;">样式</div>
<div class="a" style="left:2231px;top:181px;width:50px;height:50px;border-radius:5px;border:1px solid #e4e7ec;background:#fff"></div>
<svg class="a" style="left:2246px;top:196px" width="21" height="21" viewBox="0 0 21 21" fill="none" stroke="#5e6d88" stroke-width="1.6"><rect x="1.3" y="1.3" width="18.4" height="18.4" rx="1.5"/><path d="M1.3 5.8 H19.7 M4.5 10 H15.5 M4.5 14 H12.5"/></svg>
<div class="t" style="left:2296px;top:185px;font-size:15px;color:#1d2129;font-weight:bold;">表单容器</div>
<svg class="a" style="left:2297px;top:210px" width="19" height="18" viewBox="0 0 19 18" fill="none" stroke="#0052d9" stroke-width="1.4"><path d="M1 2 H7 Q9.5 2 9.5 4 Q9.5 2 12 2 H18 V14 H1 Z" stroke-linejoin="round"/><path d="M9.5 4 V14"/><path d="M1 14.2 H18" stroke-width="2"/><path d="M8 14.5 L9.5 16.8 L11 14.5 Z" fill="#0052d9" stroke-width="1"/><path d="M13.8 7.2 V11.6" stroke-width="1.6"/><circle cx="13.8" cy="4.9" r="0.95" fill="#0052d9" stroke="none"/></svg>
<div class="t" style="left:2321px;top:208px;font-size:15px;color:#0052d9;font-weight:normal;">使用指引</div>
<div class="t" style="left:2477px;top:184px;font-size:15px;color:#4b5b76;font-weight:normal;">form2</div>
<svg class="a" style="left:2521px;top:185px" width="18" height="19" viewBox="0 0 18 19" fill="none" stroke="#5e6d88" stroke-width="1.4"><path d="M5 1 H11 L16 6 V14.5 H5 Z M11 1 V6 H16" stroke-linejoin="round"/><path d="M5 4.5 H2 V17.5 H12.5 V14.5"/></svg>
<div class="a" style="left:2212px;top:254px;width:348px;height:1px;background:#e1e4ea"></div>
<div class="t" style="left:2231px;top:270px;font-size:15px;color:#1d2129;font-weight:bold;">数据</div>
<svg class="a" style="left:2524px;top:275px" width="12" height="8" viewBox="0 0 12 8" fill="none" stroke="#1d2129" stroke-width="1.5"><path d="M1 1.2 L6 6.2 L11 1.2"/></svg>
<div class="t" style="left:2231px;top:319px;font-size:15px;color:#4b5b76;font-weight:normal;">表单场景</div>
<svg class="a" style="left:2518px;top:318px" width="15" height="15" viewBox="0 0 15 15" fill="none" stroke="#2b2f36" stroke-width="1.2"><path d="M1.2 14.2 Q3.2 14.6 3.8 11.6 L5.4 3.6 Q6 0.9 8.6 1.4 M3.2 5.6 H7"/><path d="M7.8 7.2 L13.4 13.2 M13.4 7.2 L7.8 13.2"/></svg>
<div class="a" style="left:2231px;top:350px;width:309px;height:40px;border-radius:4px;background:#f0f1f5"></div>
<div class="t" style="left:2242px;top:360px;font-size:15px;color:#1d2129;font-weight:normal;">新增</div>
<svg class="a" style="left:2508px;top:366px" width="12" height="8" viewBox="0 0 12 8" fill="none" stroke="#c9ced8" stroke-width="1.3"><path d="M1 1.2 L6 6.2 L11 1.2"/></svg>
<div class="a" style="left:2223px;top:346px;width:112px;height:44px;border:4px solid #ff1a0f;border-radius:5px"></div>

<div class="t" style="left:2231px;top:419px;font-size:15px;color:#4b5b76;font-weight:normal;">数据源</div>
<div class="a" style="left:2231px;top:450px;width:309px;height:40px;border-radius:4px;background:#f0f1f5"></div>
<div class="a" style="left:2234px;top:452px;width:149px;height:35px;border-radius:4px;background:#fff;box-shadow:0 1px 1px rgba(60,80,110,0.25)"></div>
<svg class="a" style="left:2299px;top:462px" width="18" height="17" viewBox="0 0 18 17" fill="none" stroke="#2b2f36" stroke-width="1.4"><ellipse cx="9" cy="4" rx="7.6" ry="3"/><path d="M1.4 4 V12.5 C1.4 14.2 4.8 15.6 9 15.6 C13.2 15.6 16.6 14.2 16.6 12.5 V4 M1.4 8.3 C1.4 10 4.8 11.4 9 11.4 C13.2 11.4 16.6 10 16.6 8.3"/></svg>
<svg class="a" style="left:2455px;top:462px" width="15" height="15" viewBox="0 0 15 15" fill="none" stroke="#5e6d88" stroke-width="1.2"><path d="M1.2 14.2 Q3.2 14.6 3.8 11.6 L5.4 3.6 Q6 0.9 8.6 1.4 M3.2 5.6 H7"/><path d="M7.8 7.2 L13.4 13.2 M13.4 7.2 L7.8 13.2"/></svg>
<div class="a" style="left:2240px;top:408px;width:291px;height:116px;border-right:1px solid rgba(0,0,0,0.03);border-bottom:1px solid rgba(0,0,0,0.03)"></div>
<div class="t" style="left:2260px;top:413px;font-size:15px;color:rgba(0,0,0,0.06)">新增</div>
<div class="t" style="left:2260px;top:450px;font-size:15px;color:rgba(0,0,0,0.06)">更新</div>
<div class="t" style="left:2260px;top:487px;font-size:15px;color:rgba(0,0,0,0.06)">查看</div>
<div class="t" style="left:2278px;top:499px;font-size:15px;color:#1d2129;font-weight:normal;">数据模型</div>
<div class="t" style="left:2440px;top:499px;font-size:15px;color:#a3abba;font-weight:normal;">表达式</div>
<div class="t" style="left:2231px;top:551px;font-size:15px;color:#4b5b76;font-weight:normal;">数据模型</div>
<svg class="a" style="left:2482px;top:549px" width="18" height="18" viewBox="0 0 18 18" fill="none" stroke="#2b2f36" stroke-width="1.4"><path d="M15.5 7.5 A6.8 6.8 0 0 0 3.2 5.2 M2.5 10.5 A6.8 6.8 0 0 0 14.8 12.8"/><path d="M2.8 1.8 V5.6 H6.6 M15.2 16.2 V12.4 H11.4"/></svg>
<svg class="a" style="left:2512px;top:549px" width="18" height="18" viewBox="0 0 18 18" fill="none" stroke="#2b2f36" stroke-width="1.4"><path d="M9 1 L16 5 V13 L9 17 L2 13 V5 Z" stroke-linejoin="round"/><circle cx="9" cy="9" r="2.6"/></svg>
<div class="a" style="left:2231px;top:582px;width:309px;height:40px;border-radius:4px;background:#f0f1f5"></div>
<div class="t" style="left:2241px;top:592px;font-size:15px;color:#1d2129;font-weight:normal;">客户信息 <span style="color:#a6b0c3">(khxx_dpevgv2)</span></div>
<svg class="a" style="left:2511px;top:593px" width="18" height="18" viewBox="0 0 18 18" fill="none" stroke="#2563eb" stroke-width="1.4"><ellipse cx="9" cy="4.2" rx="7.6" ry="3"/><path d="M1.4 4.2 V13 C1.4 14.7 4.8 16.2 9 16.2 C13.2 16.2 16.6 14.7 16.6 13 V4.2 M1.4 8.6 C1.4 10.3 4.8 11.8 9 11.8 C13.2 11.8 16.6 10.3 16.6 8.6"/></svg>
<div class="t" style="left:2231px;top:651px;font-size:15px;color:#4b5b76;font-weight:normal;">字段管理</div>
<div class="a" style="left:2231px;top:700px;width:20px;height:20px;border-radius:3px;background:#0052d9"></div>
<svg class="a" style="left:2234px;top:703px" width="14" height="14" viewBox="0 0 14 14" fill="none" stroke="#fff" stroke-width="2.4"><path d="M1.2 7 L5 10.8 L12.6 3"/></svg>
<div class="t" style="left:2264px;top:700px;font-size:15px;color:#1d2129;font-weight:normal;">字段</div>
<div class="a" style="left:2225px;top:737px;width:309px;height:1px;background:#e4e7ec"></div>
<div class="a" style="left:2231px;top:756px;width:20px;height:20px;border-radius:3px;background:#bcd2f7"></div>
<svg class="a" style="left:2234px;top:759px" width="14" height="14" viewBox="0 0 14 14" fill="none" stroke="#fff" stroke-width="2.4"><path d="M1.2 7 L5 10.8 L12.6 3"/></svg>
<div class="t" style="left:2264px;top:756px;font-size:15px;color:#1d2129;font-weight:normal;">名称</div>
<div class="a" style="left:2225px;top:793px;width:309px;height:1px;background:#e4e7ec"></div>
<div class="a" style="left:2231px;top:812px;width:20px;height:20px;border-radius:3px;background:#0052d9"></div>
<svg class="a" style="left:2234px;top:815px" width="14" height="14" viewBox="0 0 14 14" fill="none" stroke="#fff" stroke-width="2.4"><path d="M1.2 7 L5 10.8 L12.6 3"/></svg>
<div class="t" style="left:2264px;top:812px;font-size:15px;color:#1d2129;font-weight:normal;">性别</div>
<div class="a" style="left:2225px;top:849px;width:309px;height:1px;background:#e4e7ec"></div>
<div class="a" style="left:2231px;top:868px;width:20px;height:20px;border-radius:3px;background:#0052d9"></div>
<svg class="a" style="left:2234px;top:871px" width="14" height="14" viewBox="0 0 14 14" fill="none" stroke="#fff" stroke-width="2.4"><path d="M1.2 7 L5 10.8 L12.6 3"/></svg>
<div class="t" style="left:2264px;top:868px;font-size:15px;color:#1d2129;font-weight:normal;">电话</div>
<div class="a" style="left:2225px;top:905px;width:309px;height:1px;background:#e4e7ec"></div>
<div class="a" style="left:2231px;top:924px;width:20px;height:20px;border-radius:3px;background:#0052d9"></div>
<svg class="a" style="left:2234px;top:927px" width="14" height="14" viewBox="0 0 14 14" fill="none" stroke="#fff" stroke-width="2.4"><path d="M1.2 7 L5 10.8 L12.6 3"/></svg>
<div class="t" style="left:2264px;top:924px;font-size:15px;color:#1d2129;font-weight:normal;">邮箱</div>
<div class="a" style="left:2225px;top:961px;width:309px;height:1px;background:#e4e7ec"></div>
<div class="a" style="left:2231px;top:980px;width:20px;height:20px;border-radius:3px;background:#0052d9"></div>
<svg class="a" style="left:2234px;top:983px" width="14" height="14" viewBox="0 0 14 14" fill="none" stroke="#fff" stroke-width="2.4"><path d="M1.2 7 L5 10.8 L12.6 3"/></svg>
<div class="t" style="left:2264px;top:980px;font-size:15px;color:#1d2129;font-weight:normal;">标签</div>
<div class="a" style="left:2225px;top:1017px;width:309px;height:1px;background:#e4e7ec"></div>
<div class="a" style="left:2231px;top:1036px;width:20px;height:20px;border-radius:3px;background:#0052d9"></div>
<svg class="a" style="left:2234px;top:1039px" width="14" height="14" viewBox="0 0 14 14" fill="none" stroke="#fff" stroke-width="2.4"><path d="M1.2 7 L5 10.8 L12.6 3"/></svg>
<div class="t" style="left:2264px;top:1036px;font-size:15px;color:#1d2129;font-weight:normal;">客户类型</div>
<div class="a" style="left:2225px;top:1073px;width:309px;height:1px;background:#e4e7ec"></div>
<div class="a" style="left:2231px;top:1092px;width:20px;height:20px;border-radius:3px;background:#0052d9"></div>
<svg class="a" style="left:2234px;top:1095px" width="14" height="14" viewBox="0 0 14 14" fill="none" stroke="#fff" stroke-width="2.4"><path d="M1.2 7 L5 10.8 L12.6 3"/></svg>
<div class="t" style="left:2264px;top:1092px;font-size:15px;color:#1d2129;font-weight:normal;">添加渠道</div>
<div class="a" style="left:2225px;top:1129px;width:309px;height:1px;background:#e4e7ec"></div>
<div class="a" style="left:2231px;top:1148px;width:20px;height:20px;border-radius:3px;background:#0052d9"></div>
<svg class="a" style="left:2234px;top:1151px" width="14" height="14" viewBox="0 0 14 14" fill="none" stroke="#fff" stroke-width="2.4"><path d="M1.2 7 L5 10.8 L12.6 3"/></svg>
<div class="t" style="left:2264px;top:1148px;font-size:15px;color:#1d2129;font-weight:normal;">客户阶段</div>
<div class="a" style="left:2225px;top:1185px;width:309px;height:1px;background:#e4e7ec"></div>
<svg class="a" style="left:2476px;top:699px" width="17" height="17" viewBox="0 0 17 17" fill="none" stroke="#2b2f36" stroke-width="1.4"><path d="M1.5 15.5 L2.2 11.8 L11.4 2.6 L14.4 5.6 L5.2 14.8 Z M9.8 4.2 L12.8 7.2" stroke-linejoin="round"/></svg>
<svg class="a" style="left:2510px;top:699px" width="18" height="18" viewBox="0 0 18 18" fill="none" stroke="#2b2f36" stroke-width="1.4"><path d="M15.5 7.5 A6.8 6.8 0 0 0 3.2 5.2 M2.5 10.5 A6.8 6.8 0 0 0 14.8 12.8"/><path d="M2.8 1.8 V5.6 H6.6 M15.2 16.2 V12.4 H11.4"/></svg>
<div class="t" style="left:86px;top:1203px;font-size:15px;color:#8c99b0;font-weight:normal;">SCRM-客户管理</div>
<div class="t" style="left:224px;top:1203px;font-size:15px;color:#8c99b0;font-weight:normal;">页面</div>
<div class="t" style="left:283px;top:1203px;font-size:15px;color:#8c99b0;font-weight:normal;">layout_pdcll5nc</div>
<div class="t" style="left:415px;top:1203px;font-size:15px;color:#8c99b0;font-weight:normal;">插槽</div>
<div class="t" style="left:474px;top:1203px;font-size:15px;color:#8c99b0;font-weight:normal;">布局组件</div>
<div class="t" style="left:563px;top:1203px;font-size:15px;color:#8c99b0;font-weight:normal;">插槽</div>
<svg class="a" style="left:205px;top:1208px" width="8" height="12" viewBox="0 0 8 12" fill="none" stroke="#c3c9d4" stroke-width="1.3"><path d="M1.2 1 L6.5 6 L1.2 11"/></svg>
<svg class="a" style="left:264px;top:1208px" width="8" height="12" viewBox="0 0 8 12" fill="none" stroke="#c3c9d4" stroke-width="1.3"><path d="M1.2 1 L6.5 6 L1.2 11"/></svg>
<svg class="a" style="left:396px;top:1208px" width="8" height="12" viewBox="0 0 8 12" fill="none" stroke="#c3c9d4" stroke-width="1.3"><path d="M1.2 1 L6.5 6 L1.2 11"/></svg>
<svg class="a" style="left:455px;top:1208px" width="8" height="12" viewBox="0 0 8 12" fill="none" stroke="#c3c9d4" stroke-width="1.3"><path d="M1.2 1 L6.5 6 L1.2 11"/></svg>
<svg class="a" style="left:544px;top:1208px" width="8" height="12" viewBox="0 0 8 12" fill="none" stroke="#c3c9d4" stroke-width="1.3"><path d="M1.2 1 L6.5 6 L1.2 11"/></svg>
<svg class="a" style="left:603px;top:1208px" width="8" height="12" viewBox="0 0 8 12" fill="none" stroke="#c3c9d4" stroke-width="1.3"><path d="M1.2 1 L6.5 6 L1.2 11"/></svg>
<div class="a" style="left:676px;top:1201px;width:15px;height:23px;background:#f9fafb"></div>
<div class="t" style="left:621px;top:1202px;font-size:15px;color:#2d3a55;font-weight:normal;">表单容器</div>
<svg class="a" style="left:1801px;top:1206px" width="18" height="16" viewBox="0 0 18 16" fill="none" stroke="#2b2f36" stroke-width="1.4"><rect x="1" y="1" width="16" height="14" rx="1"/><rect x="4" y="5" width="10" height="5.5"/></svg>
<div class="t" style="left:1830px;top:1202px;font-size:15px;color:#1d2129;font-weight:normal;">开发调试工具</div>
<svg class="a" style="left:1944px;top:1206px" width="22" height="14" viewBox="0 0 22 14" fill="none" stroke="#2b2f36" stroke-width="1.4"><path d="M5.5 2 L1.2 7 L5.5 12 M16.5 2 L20.8 7 L16.5 12 M12.5 1 L9.5 13"/></svg>
<div class="t" style="left:1975px;top:1202px;font-size:15px;color:#1d2129;font-weight:normal;">代码编辑器</div>
<svg class="a" style="left:2076px;top:1205px" width="18" height="17" viewBox="0 0 18 17" fill="none" stroke="#2b2f36" stroke-width="1.5"><path d="M2.3 5.2 A7.3 7.3 0 1 1 1.8 9.5"/><path d="M1.2 1.8 V5.8 H5"/><path d="M9.6 4.6 V8.8 L12.4 11"/></svg>
<div class="t" style="left:2105px;top:1202px;font-size:15px;color:#1d2129;font-weight:normal;">开发历史版本</div>
<div class="a" style="left:2210px;top:1200px;width:1px;height:25px;background:#dfe3ea"></div>
<svg class="a" style="left:2339px;top:1201px" width="22" height="22" viewBox="0 0 22 22" fill="none" stroke="#2b2f36" stroke-width="1.3"><path d="M14.6 8.6 Q15.6 11.8 13 12.6 Q11 13.2 10.4 14.8 Q10 16.8 8.6 20.2 Q7.4 21 5.6 19.6 Q1.4 16 1.6 11 Q2 5 8 4.8 Q10 4.8 11.2 5.2"/><circle cx="4.8" cy="10.4" r="0.9" fill="#2b2f36"/><circle cx="7.2" cy="7.6" r="0.9" fill="#2b2f36"/><circle cx="10.2" cy="7.8" r="0.9" fill="#2b2f36"/><circle cx="12.8" cy="10" r="0.9" fill="#2b2f36"/><circle cx="7.8" cy="16.6" r="1.1"/><circle cx="16" cy="4.2" r="3" fill="#ed7b2f" stroke="none"/></svg>
<div class="t" style="left:2368px;top:1202px;font-size:15px;color:#1d2129;font-weight:normal;">应用主题</div>
</body></html>
